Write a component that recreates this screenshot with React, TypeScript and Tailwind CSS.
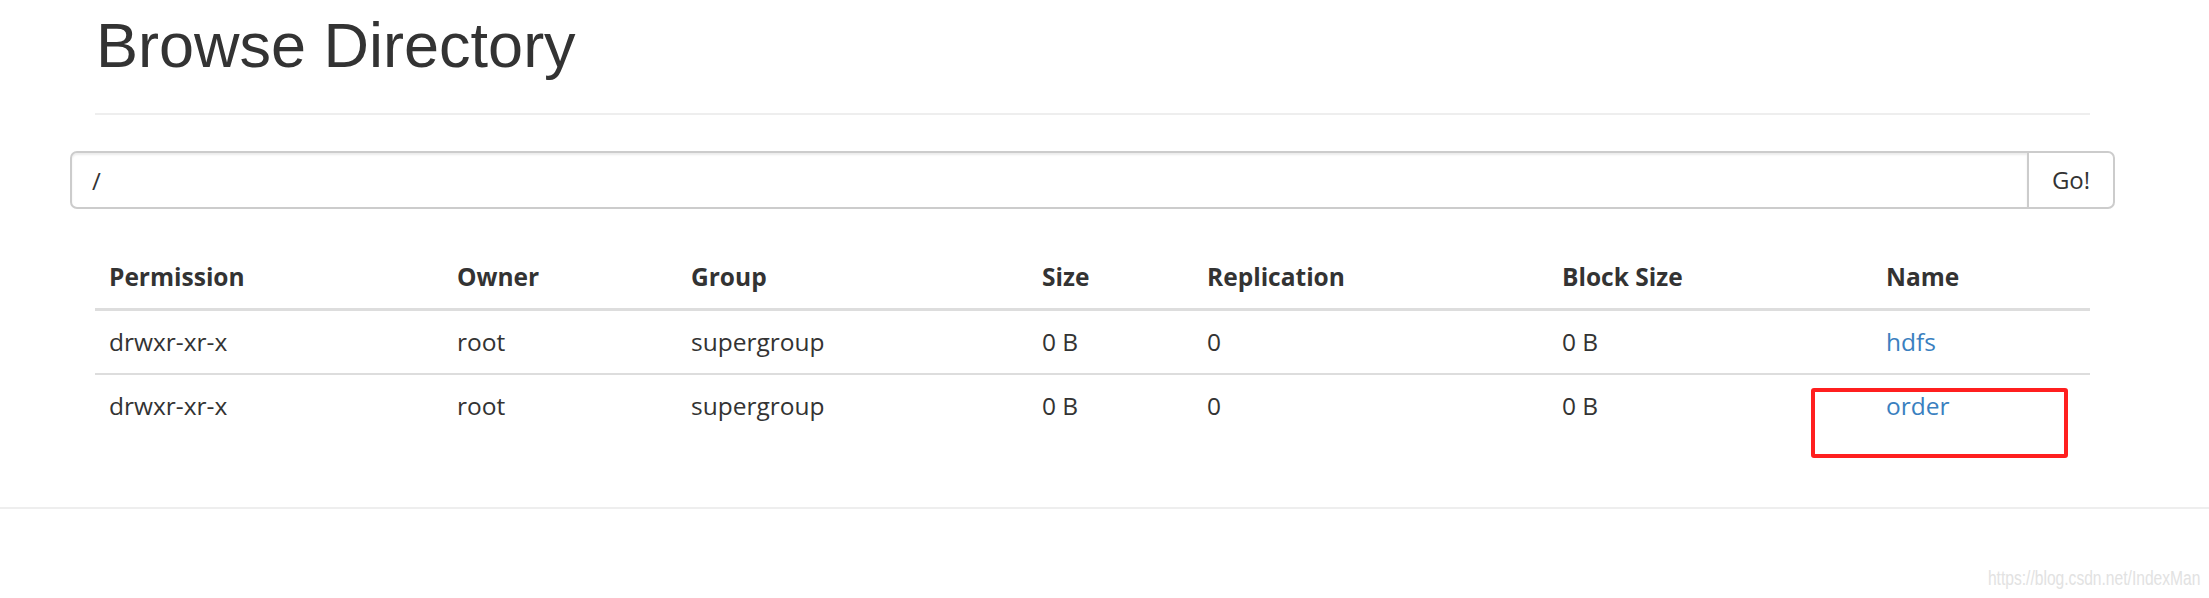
const rows = [
  { permission: 'drwxr-xr-x', owner: 'root', group: 'supergroup', size: '0 B', replication: '0', blockSize: '0 B', name: 'hdfs' },
  { permission: 'drwxr-xr-x', owner: 'root', group: 'supergroup', size: '0 B', replication: '0', blockSize: '0 B', name: 'order' },
]

const columns = [
  { label: 'Permission', width: 'w-[348px]' },
  { label: 'Owner', width: 'w-[234px]' },
  { label: 'Group', width: 'w-[351px]' },
  { label: 'Size', width: 'w-[165px]' },
  { label: 'Replication', width: 'w-[355px]' },
  { label: 'Block Size', width: 'w-[324px]' },
  { label: 'Name', width: 'w-[218px]' },
]

export default function App() {
  return (
    <div className="w-[2209px] h-[598px] bg-white text-[#333] overflow-hidden pt-[11px] font-['Open_Sans',sans-serif]">
      <div className="ml-[95px] w-[1995px]">
        <div className="pb-[33px] border-b-2 border-[#eee]">
          <h1 className="text-[63px] leading-[69px] font-normal font-['Liberation_Sans',Arial,sans-serif] pl-[1px]">
            Browse Directory
          </h1>
        </div>

        <div className="-mx-[25px] mt-[36px] flex h-[58px] text-[24px]">
          <input
            defaultValue="/"
            className="flex-1 min-w-0 h-full border-2 border-[#ccc] rounded-l-[7px] px-[20px] text-[#333] shadow-[inset_0_2px_2px_rgba(0,0,0,0.075)] outline-none"
          />
          <button className="-ml-[2px] w-[88px] h-full border-2 border-[#ccc] rounded-r-[7px] bg-white text-[#333]">
            Go!
          </button>
        </div>

        <table className="mt-[37px] w-full table-fixed border-collapse text-[24.5px] leading-[34px]">
          <thead>
            <tr>
              {columns.map(c => (
                <th key={c.label} className={`${c.width} text-left font-bold px-[14px] py-[14px] border-b-[3px] border-[#ddd]`}>
                  {c.label}
                </th>
              ))}
            </tr>
          </thead>
          <tbody>
            {rows.map((r, i) => (
              <tr key={r.name}>
                <td className="px-[14px] py-[14px] border-t-2 border-[#ddd]">{r.permission}</td>
                <td className="px-[14px] py-[14px] border-t-2 border-[#ddd]">{r.owner}</td>
                <td className="px-[14px] py-[14px] border-t-2 border-[#ddd]">{r.group}</td>
                <td className="px-[14px] py-[14px] border-t-2 border-[#ddd]">{r.size}</td>
                <td className="px-[14px] py-[14px] border-t-2 border-[#ddd]">{r.replication}</td>
                <td className="px-[14px] py-[14px] border-t-2 border-[#ddd]">{r.blockSize}</td>
                <td className="relative px-[14px] py-[14px] border-t-2 border-[#ddd]">
                  <a href="#" className="text-[#3a7fc0]">{r.name}</a>
                  {i === 1 && (
                    <span className="absolute left-[-61px] top-[13px] w-[257px] h-[70px] border-4 border-[#ff1f1f] rounded-[3px]" />
                  )}
                </td>
              </tr>
            ))}
          </tbody>
        </table>
      </div>

      <div className="mt-[70px] border-t-2 border-[#eee]" />

      <div className="flex justify-end pr-[9px] mt-[57px]">
        <span className="inline-block origin-right scale-x-[0.78] text-[20px] leading-[24px] text-[#e2e2e2] font-['Liberation_Sans',Arial,sans-serif]">
          https://blog.csdn.net/IndexMan
        </span>
      </div>
    </div>
  )
}
